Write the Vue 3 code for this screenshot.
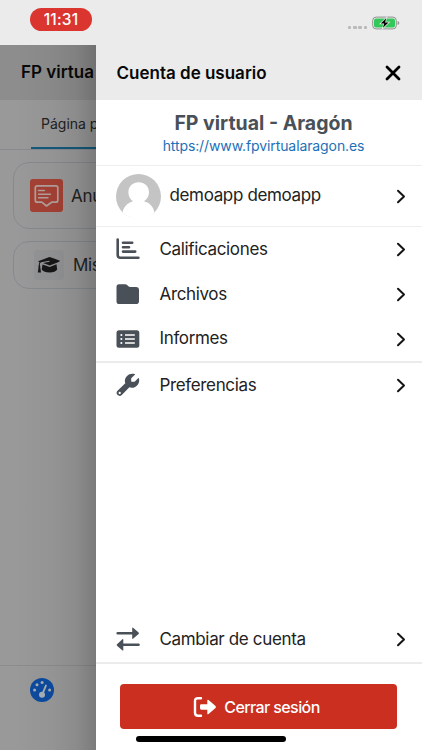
<script setup>
const menu = [
  { id: 'grades', label: 'Calificaciones' },
  { id: 'files', label: 'Archivos' },
  { id: 'reports', label: 'Informes' },
  { id: 'preferences', label: 'Preferencias' },
]
</script>

<template>
  <div class="screen">
    <header class="status">
      <span class="clock">11:31</span>
      <span class="indicators">
        <span class="dots"><i></i><i></i><i></i><i></i></span>
        <svg class="battery" viewBox="0 0 28 14" width="28" height="14">
          <rect x=".7" y="1.1" width="23.6" height="11.8" rx="3.4" fill="none" stroke="#8f8f90" />
          <path d="M25.6 5v4q1.7-.5 1.7-2T25.6 5" fill="#929292" />
          <rect x="2" y="2.4" width="21" height="9.2" rx="2" fill="#34c759" />
          <path d="M14.2 2.2 8.8 7.6h3.4l-1.2 4.2 5.500-5.400h-3.400z" fill="#000" stroke="#ebebeb" stroke-width="1.5" />
          <path d="M14.2 2.2 8.8 7.6h3.4l-1.2 4.2 5.500-5.400h-3.400z" fill="#000" />
        </svg>
      </span>
    </header>

    <div class="body">
      <aside class="page">
        <div class="page-title">FP virtua</div>
        <div class="tab"><span>Página p</span></div>
        <div class="card first">
          <svg width="33" height="33" viewBox="0 0 33 33">
            <rect width="33" height="33" rx="3" fill="#a54135" />
            <path d="M7.3 6.8h18.500q2 0 2 2v12.400q0 2-2 2h-4.200L16.500 27 11.800 23.200H7.300q-2 0-2-2V8.800q0-2 2-2z" fill="none" stroke="#b3a09d" stroke-width="1.7" stroke-linejoin="round" />
            <path d="M8.500 11.500h6M8.500 15.200h12M8.500 18.800h9.500" stroke="#b3a09d" stroke-width="1.4" stroke-linecap="round" />
          </svg>
          <span>Anu</span>
        </div>
        <div class="card second">
          <span class="cap-box">
            <svg width="24" height="18" viewBox="0 0 24 18">
              <path d="M1 5.2 12.5 1Q23 4.5 23 5.1T12.8 9.4L6 7l6.6-1.3-.3-1L4 6.3q-1.2.5-1.2 3 .8.7.4 1.6L4 16.5H.8l.8-5.6q-.6-1 .2-1.7.1-2 .7-3z" fill="#171717" />
              <path d="M5.5 8.6 12.8 11l6.7-2.7.7 5.2q-2 3-7.5 3-6 0-8-3z" fill="#171717" />
            </svg>
          </span>
          <span>Mis</span>
        </div>
        <div class="page-nav">
          <svg width="24" height="24" viewBox="0 0 24 24">
            <circle cx="12" cy="12" r="12" fill="#0d4b9f" />
            <g fill="#a9afb7">
              <circle cx="4.6" cy="12.1" r="1.5" /><circle cx="7" cy="6.8" r="1.5" />
              <circle cx="12.1" cy="4.6" r="1.5" /><circle cx="19.6" cy="12.1" r="1.5" />
              <circle cx="12" cy="16.7" r="3" />
            </g>
            <path d="m12.4 16 3.500-8.400" stroke="#a9afb7" stroke-width="1.9" stroke-linecap="round" />
          </svg>
        </div>
      </aside>

      <main class="drawer">
        <div class="drawer-head">
          <h1>Cuenta de usuario</h1>
          <svg width="16" height="16" viewBox="0 0 16 16"><path d="m2 2 12 12M14 2 2 14" stroke="#000" stroke-width="2.8" stroke-linecap="round" /></svg>
        </div>
        <div class="site">
          <h2>FP virtual - Aragón</h2>
          <a>https://www.fpvirtualaragon.es</a>
        </div>
        <div class="user">
          <svg width="45" height="45" viewBox="0 0 45 45">
            <circle cx="22.5" cy="22.5" r="22.5" fill="#c4c4c4" />
            <path d="M22.7 8.3c6 0 10.3 4.3 10.3 10 0 4-1.9 7-5 9 5.800 1.400 9.600 6 10.500 11.500A22.500 22.500 0 0 1 6.500 38.500C7.400 33 11.400 28.700 17 27.200c-3-2-4.600-5-4.600-8.900 0-5.800 4.300-10 10.300-10z" fill="#fff" />
          </svg>
          <span class="label">demoapp demoapp</span>
          <svg class="chevron" width="10" height="15" viewBox="0 0 10 15"><path d="m2 1.7 6 5.8-6 5.8" /></svg>
        </div>
        <div v-for="item in menu" :key="item.id" class="row" :class="item.id">
          <svg class="icon" width="24" height="24" viewBox="0 0 24 24">
            <template v-if="item.id === 'grades'">
              <path d="M1.700 3.500V19q0 2.800 2.800 2.800h17.900" class="line" />
              <path d="M7 6.700h9.200M7 11.200h6M7 15.600h12.200" class="line" />
            </template>
            <path v-else-if="item.id === 'files'" d="M3 2.300h6.300q1 0 1.800.8l1.300 1.200q.7.800 1.700.8H20q3 0 3 3v11.200q0 2.800-3 2.800H3Q.500 22.100.500 19.300V5Q.500 2.300 3 2.300z" />
            <template v-else-if="item.id === 'reports'">
              <rect x=".500" y="3.200" width="22.800" height="17.600" rx="2.500" />
              <path d="M9 8h9.800M9 12h9.800M9 16h9.800" class="cut" />
              <path d="M5.300 8h.1M5.300 12h.1M5.300 16h.1" class="cut dot" />
            </template>
            <template v-else>
              <path d="M16.300.8q1.400-.3 2.400.1.500.4.100.9l-3.600 3.500v3.400h3.400l3.500-3.500q.7-.5.900.2c1.100 4.900-2.600 9.300-7.100 9.300q-1.500 0-2.500-.4L5.800 22q-2 1.800-4.200.1-2-2.100-.1-4.300l7.800-7.600C7.500 5.600 11.500.9 16.300.8z" />
              <circle cx="3.700" cy="20" r="1.150" class="hole" />
            </template>
          </svg>
          <span class="label">{{ item.label }}</span>
          <svg class="chevron" width="10" height="15" viewBox="0 0 10 15"><path d="m2 1.7 6 5.8-6 5.8" /></svg>
        </div>
        <div class="row switch">
          <svg class="icon" width="24" height="24" viewBox="0 0 24 24">
            <path d="M1.700 6.200H17M7 17.800h15.500" class="line" />
            <path d="M16.200 1.200q0-1 .9-.5l5.500 4.700q.7.800 0 1.600L17 11.800q-.8.400-.8-.5zM7.300 12.700q0-1-.9-.5L1 17.200q-.7.800 0 1.600l5.500 4.700q.8.400.8-.5z" />
          </svg>
          <span class="label">Cambiar de cuenta</span>
          <svg class="chevron" width="10" height="15" viewBox="0 0 10 15"><path d="m2 1.7 6 5.8-6 5.8" /></svg>
        </div>
        <footer>
          <button>
            <svg width="24" height="22" viewBox="0 0 24 22">
              <path d="M8 2.200H5q-3 0-3 3v11.600q0 3 3 3h3" fill="none" stroke="#fff" stroke-width="2.400" stroke-linecap="round" />
              <path d="M8.300 8.300h6V4.600q0-1.500 1.300-.6l6.900 6q.9 1 0 2l-6.900 6q-1.300.9-1.300-.6v-3.700h-6Q7 13.700 7 12.300V9.700q0-1.400 1.300-1.400z" fill="#fff" />
            </svg>
            <span>Cerrar sesión</span>
          </button>
        </footer>
      </main>
    </div>
    <div class="home"></div>
  </div>
</template>

<style>
body { margin: 0; overflow: hidden; }
</style>

<style scoped>
* { box-sizing: border-box; }
.screen { position: relative; display: flex; flex-direction: column; width: 422px; height: 750px; background: #fff; font-family: Inter, "Liberation Sans", sans-serif; color: #222; white-space: nowrap; }
.status { height: 45px; flex: none; display: flex; justify-content: space-between; padding: 8px 22px 0 30px; background: #ebebeb; }
.clock { width: 62px; height: 23px; border-radius: 12px; background: #da352f; color: #fff; font-size: 15.5px; font-weight: 500; letter-spacing: .2px; line-height: 23.5px; text-align: center; }
.indicators { display: flex; gap: 5px; padding-top: 8px; }
.dots { display: flex; gap: 1.8px; padding-top: 10px; }
.dots i { width: 3.4px; height: 3.4px; border-radius: 1px; background: #bababb; }
.body { flex: 1; display: flex; }
.page { position: relative; width: 96px; overflow: hidden; background: #999; display: flex; flex-direction: column; }
.page::after { content: ""; position: absolute; inset: 0; background: linear-gradient(90deg, rgba(0, 0, 0, 0) 15%, rgba(0, 0, 0, .035) 55%, rgba(0, 0, 0, .09) 80%, rgba(0, 0, 0, .2)); }
.page-title { height: 55px; flex: none; padding-left: 21px; background: #8d8d8d; color: #080808; font-size: 17px; font-weight: 600; line-height: 55px; }
.tab { height: 50px; flex: none; border-bottom: 1px solid #868a8f; padding-left: 31px; }
.tab span { display: block; width: 80px; height: 49px; padding-left: 10px; border-bottom: 2px solid #145a7c; font-size: 14px; line-height: 48px; }
.card { width: 180px; flex: none; display: flex; align-items: center; border: 1px solid #868a8f; border-radius: 16px; margin-left: 13px; font-size: 17px; letter-spacing: -.3px; }
.first { height: 67px; margin-top: 12px; padding-left: 16px; gap: 8px; }
.second { height: 48px; margin-top: 12px; padding-left: 20px; gap: 9px; }
.cap-box { display: grid; place-items: center; width: 30px; height: 30px; border-radius: 4px; background: #939496; }
.page-nav { margin-top: auto; height: 85px; padding: 12px 0 0 30px; border-top: 1px solid #8c8c8c; }
.drawer { width: 326px; display: flex; flex-direction: column; background: #fff; }
.drawer-head { height: 55px; flex: none; display: flex; align-items: center; justify-content: space-between; padding: 0 21px 0 20.5px; background: #ebebeb; }
h1 { margin: 0; font-size: 17px; font-weight: 600; color: #080808; }
.site { height: 66px; flex: none; padding-top: 11px; border-bottom: 1px solid #eee; text-align: center; }
h2 { margin: 0 0 0 9px; font-size: 19.5px; line-height: 24px; font-weight: 700; color: #495057; }
.site a { display: block; margin-left: 9px; font-size: 14px; line-height: 22px; letter-spacing: -.1px; color: #1b70b8; }
.user { height: 61px; flex: none; display: flex; align-items: center; gap: 8.5px; padding: 0 16px 0 20px; border-bottom: 1px solid #eee; }
.row { height: 45px; flex: none; display: flex; align-items: center; padding: 0 16px 0 20px; gap: 19.5px; }
.label { font-size: 17px; line-height: 24px; letter-spacing: -.35px; padding-bottom: 1.5px; }
.icon { fill: #495057; flex: none; margin-bottom: 1px; }
.grades .icon { margin-bottom: 3px; }
.grades .label { padding-bottom: 2px; }
.line { fill: none; stroke: #495057; stroke-width: 2.6; stroke-linecap: round; }
.cut { stroke: #fff; stroke-width: 1.6; }
.dot { stroke-width: 2; stroke-linecap: round; }
.hole { fill: #fff; }
.chevron { margin-left: auto; fill: none; stroke: #151515; stroke-width: 2; stroke-linecap: round; stroke-linejoin: round; }
.files .icon { margin-bottom: 2px; }
.files .label { padding-bottom: 2px; }
.reports { height: 46px; border-bottom: 2px solid #ebebeb; }
.switch { margin-top: auto; height: 47px; border-bottom: 2px solid #ebebeb; }
footer { height: 86px; flex: none; padding: 20px 25px 0 24px; }
button { width: 277px; height: 45px; display: flex; align-items: center; justify-content: center; gap: 7px; border: 0; border-radius: 4px; background: #ca2f1f; color: #fff; font: 500 16px Inter, sans-serif; letter-spacing: -.6px; padding: 0 4px 0 0; }
.home { position: absolute; left: 136px; top: 736px; width: 150px; height: 6px; border-radius: 3px; background: #000; }
</style>
